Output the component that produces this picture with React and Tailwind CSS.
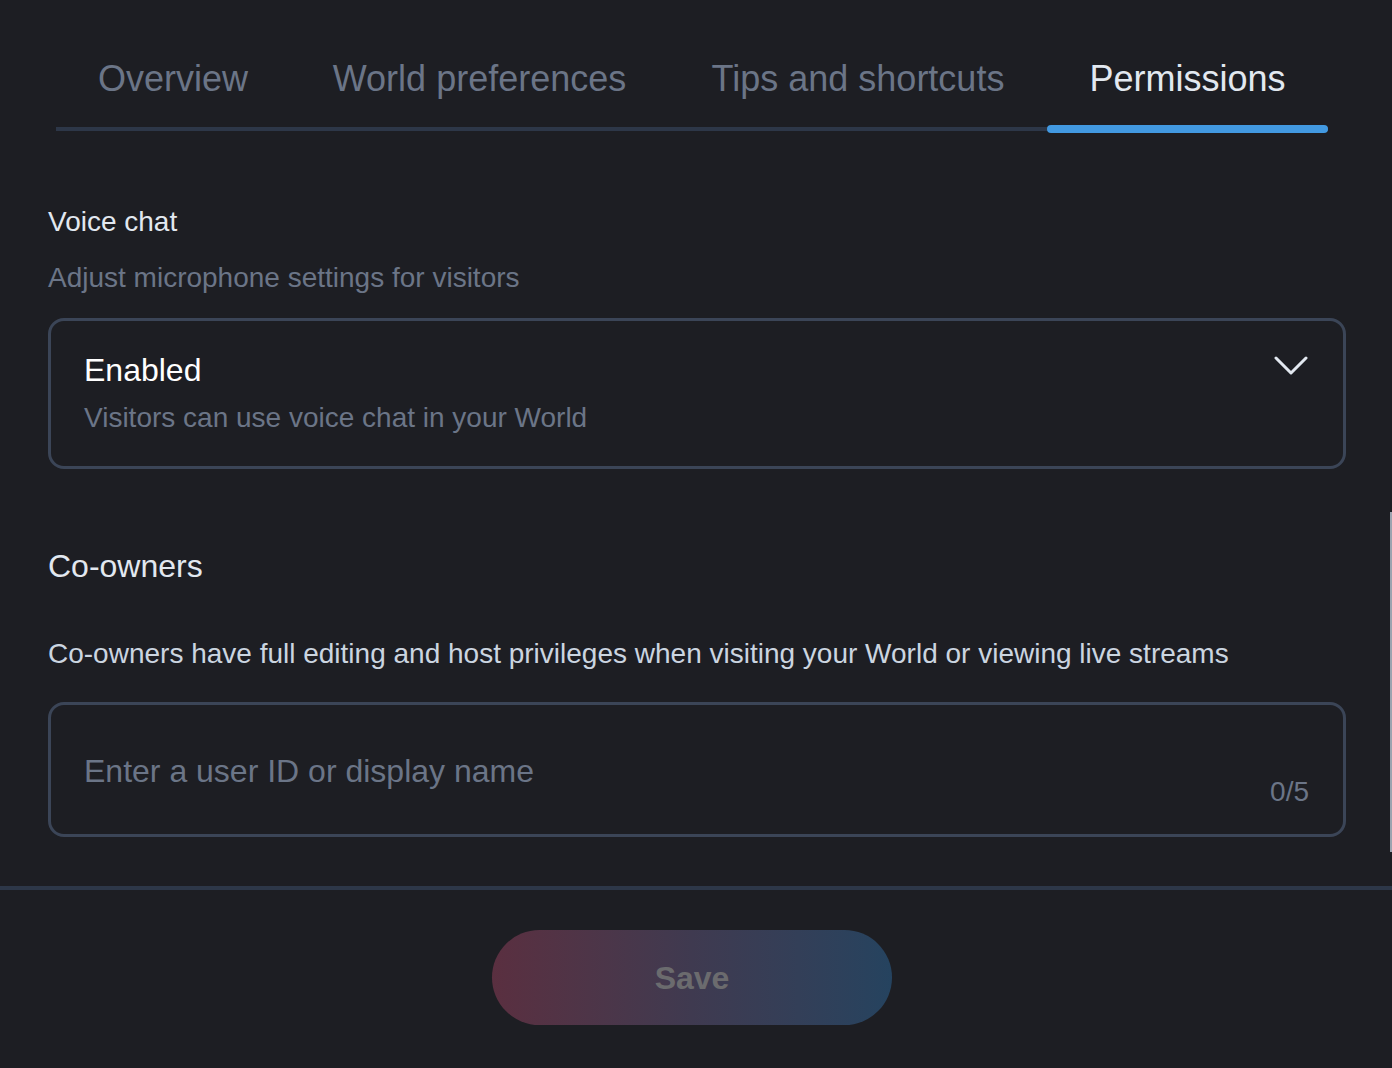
import React from 'react';

const tabs = [
    { label: 'Overview', w: 'w-[234px]' },
    { label: 'World preferences', w: 'w-[379px]' },
    { label: 'Tips and shortcuts', w: 'w-[378px]' },
    { label: 'Permissions', w: 'w-[281px]' },
];

const Tab = ({ label, w, active }) => (
    <button
        className={`relative ${w} text-center pt-[57px] pb-[27px] text-[36px] leading-[43px] whitespace-nowrap ${
            active ? 'text-[#e2e8f0]' : 'text-[#6b7587]'
        }`}
    >
        {label}
        {active && (
            <span className="absolute left-0 right-0 -bottom-[6px] h-[8px] rounded-full bg-[#4299e1]" />
        )}
    </button>
);

const Chevron = () => (
    <svg width="34" height="22" viewBox="0 0 34 22" fill="none">
        <polyline
            points="2,3 17,18 32,3"
            stroke="#e2e8f0"
            strokeWidth="3"
            strokeLinecap="round"
            strokeLinejoin="round"
        />
    </svg>
);

export default function App() {
    return (
        <div
            className="relative w-[1392px] h-[1068px] bg-[#1d1e23] overflow-hidden"
            style={{ fontFamily: '"Liberation Sans", Arial, sans-serif' }}
        >
            {/* Tabs */}
            <div className="ml-[56px] w-[1272px] flex border-b-4 border-[#2d3748]">
                {tabs.map(t => (
                    <Tab key={t.label} label={t.label} w={t.w} active={t.label === 'Permissions'} />
                ))}
            </div>

            {/* Body */}
            <div className="pl-[48px] pr-[46px]">
                <div className="mt-[75px] text-[28px] leading-[32px] text-[#e2e8f0]">Voice chat</div>
                <div className="mt-[24px] text-[28px] leading-[32px] text-[#6b7587]">
                    Adjust microphone settings for visitors
                </div>

                <div className="mt-[24px] h-[151px] border-[3px] border-[#3b4557] rounded-[16px] pl-[33px] pr-[35px] pt-[30px] flex justify-between">
                    <div>
                        <div className="text-[32px] leading-[38px] text-white">Enabled</div>
                        <div className="mt-[13px] text-[28px] leading-[32px] text-[#6b7587]">
                            Visitors can use voice chat in your World
                        </div>
                    </div>
                    <div className="pt-[4px]">
                        <Chevron />
                    </div>
                </div>

                <div className="mt-[78px] text-[32px] leading-[38px] text-[#e2e8f0]">Co-owners</div>
                <div className="mt-[53px] text-[28px] leading-[32px] text-[#cbd5e0]">
                    Co-owners have full editing and host privileges when visiting your World or viewing live streams
                </div>

                <div className="mt-[32px] h-[135px] border-[3px] border-[#3b4557] rounded-[16px] pl-[33px] pr-[34px] pt-[47px] pb-[26px] flex justify-between">
                    <input
                        className="self-start flex-1 bg-transparent outline-none text-[32px] leading-[38px] text-[#e2e8f0] placeholder:text-[#6b7587]"
                        placeholder="Enter a user ID or display name"
                    />
                    <span className="self-end text-[28px] leading-[32px] text-[#6b7587]">0/5</span>
                </div>
            </div>

            {/* Footer */}
            <div className="mt-[49px] border-t-4 border-[#2d3748] flex justify-center pt-[40px] pr-[8px]">
                <button className="w-[400px] h-[95px] rounded-full bg-gradient-to-r from-[#5a2f40] via-[#3f3a50] to-[#25435f] text-[32px] font-bold text-[#6b6b6e]">
                    Save
                </button>
            </div>

            {/* overlay scrollbar */}
            <div className="absolute right-0 top-[512px] w-[2px] h-[340px] bg-[#9ca3af]" />
        </div>
    );
}
